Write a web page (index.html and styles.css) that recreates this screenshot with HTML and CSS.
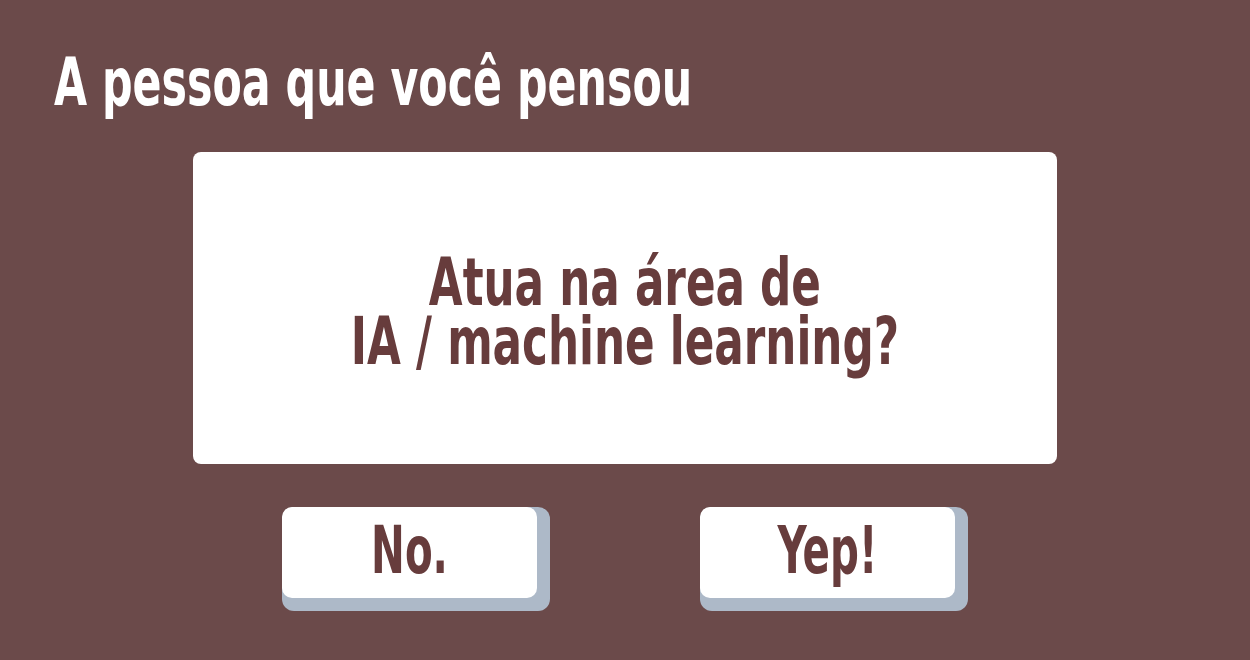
FILE: index.html
```html
<!DOCTYPE html>
<html lang="pt">
<head>
<meta charset="utf-8">
<title>A pessoa que você pensou</title>
<link rel="stylesheet" href="styles.css">
</head>
<body>
<main class="page">
  <h1 class="title"><span class="squeeze squeeze-left">A pessoa que você pensou</span></h1>
  <section class="card">
    <p class="question"><span class="squeeze squeeze-wide">Atua na área de<br>IA / machine learning?</span></p>
  </section>
  <div class="answers">
    <button class="key"><span class="key-face"><span class="squeeze">No.</span></span></button>
    <button class="key"><span class="key-face"><span class="squeeze">Yep!</span></span></button>
  </div>
</main>
</body>
</html>
```
FILE: styles.css
```css
html, body {
  margin: 0;
  padding: 0;
  background: #6b4a4a;
}
body {
  width: 1250px;
  height: 660px;
  overflow: hidden;
  font-family: "DejaVu Sans", sans-serif;
  font-stretch: condensed;
  font-weight: bold;
}
.page {
  display: flex;
  flex-direction: column;
  align-items: center;
}
.squeeze {
  display: inline-block;
  transform: scaleX(0.68);
  transform-origin: center;
}
.squeeze-left {
  transform: scaleX(0.72);
  transform-origin: left;
}
.squeeze-wide {
  transform: scaleX(0.735);
}
.title {
  align-self: stretch;
  margin: 0;
  padding: 50px 0 0 54px;
  height: 152px;
  box-sizing: border-box;
  font-size: 66px;
  line-height: 66px;
  color: #ffffff;
  white-space: nowrap;
}
.card {
  width: 864px;
  height: 312px;
  box-sizing: border-box;
  background: #ffffff;
  border-radius: 8px;
  display: flex;
  align-items: center;
  justify-content: center;
}
.question {
  margin: 7px 0 0;
  text-align: center;
  font-size: 66px;
  line-height: 59px;
  color: #673c3c;
  white-space: nowrap;
}
.answers {
  display: flex;
  gap: 150px;
  margin-top: 43px;
}
.key {
  border: 0;
  padding: 0 13px 13px 0;
  margin: 0;
  background: #adb9c8;
  border-radius: 12px;
  font: inherit;
  cursor: pointer;
}
.key-face {
  display: flex;
  align-items: center;
  justify-content: center;
  width: 255px;
  height: 91px;
  box-sizing: border-box;
  padding-bottom: 4px;
  background: #ffffff;
  border-radius: 10px;
  font-size: 66px;
  color: #673c3c;
}
```
